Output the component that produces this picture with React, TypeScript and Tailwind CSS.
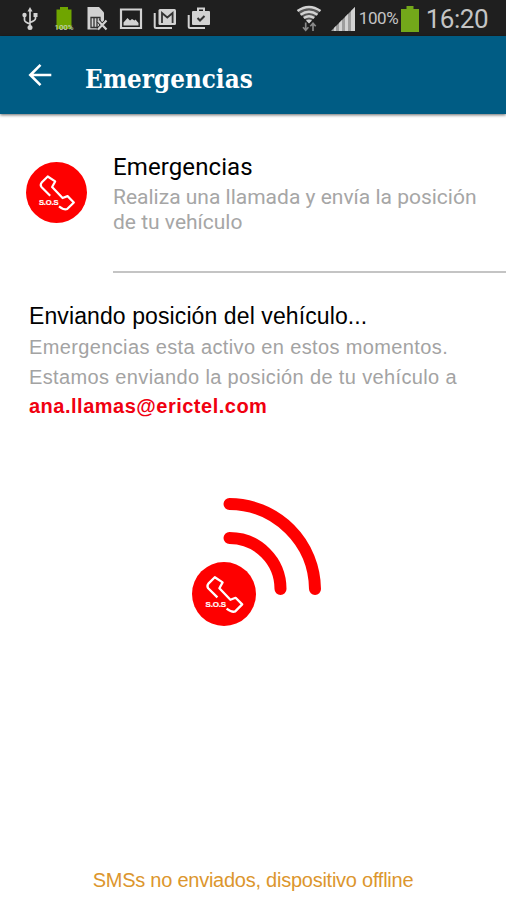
import React from 'react';

// Round SOS badge with the handset outline
function SosBadge({ className }: { className: string }) {
  return (
    <svg viewBox="0 0 64 64" className={className} aria-hidden="true">
      <circle cx="32" cy="32" r="32" fill="#fe0000" />
      <path
        d="M25.4 35.4 16.2 26.2Q14.6 24 16.4 21.6L22.8 15.2 30.6 20.4 27.4 26.2 38.4 37.8 43.6 35.8 50.2 42.4 43.2 49.4Q40.2 50.8 34.6 46.6"
        fill="none"
        stroke="#fff"
        strokeWidth="2.3"
        strokeLinejoin="round"
      />
      <text
        x="13.6"
        y="45.4"
        fill="#fff"
        stroke="#fff"
        strokeWidth="0.2"
        fontFamily="Liberation Sans, sans-serif"
        fontWeight="700"
        fontSize="8"
        textLength="20.5"
      >
        S.O.S
      </text>
    </svg>
  );
}

function NotificationIcons() {
  return (
    <div className="flex items-center">
      {/* USB */}
      <svg viewBox="0 0 18 24" className="h-6 w-[18px]" fill="none" stroke="#d2d2d2" strokeWidth="1.7">
        <path d="M9 4v16M3.5 8v5q0 2 5.5 4M14.5 8v3.5q0 2-5.5 4" />
        <path d="M9 0 6.5 4.5h5z" fill="#d2d2d2" stroke="none" />
        <circle cx="9" cy="20.5" r="2.5" fill="#d2d2d2" stroke="none" />
        <circle cx="3.5" cy="8" r="2.2" fill="#d2d2d2" stroke="none" />
        <path d="M12.5 6h4v4h-4z" fill="#d2d2d2" stroke="none" />
      </svg>
      {/* Full battery */}
      <svg viewBox="0 0 22 24" className="ml-[14px] h-6 w-[22px]">
        <path d="M7 0h8v2.5h3.5V22H3.5V2.5H7z" fill="#6fa500" />
        <text
          x="1.5"
          y="23"
          fill="#c2cfae"
          fontFamily="Roboto, sans-serif"
          fontWeight="500"
          fontSize="8"
          textLength="19"
          lengthAdjust="spacingAndGlyphs"
        >
          100%
        </text>
      </svg>
      {/* SIM missing */}
      <svg viewBox="0 0 22 24" className="ml-[11px] h-6 w-[22px]">
        <path d="M1.5 0H13l5 5.5V14l-4 8.5H1.5z" fill="#d2d2d2" />
        <path d="M5 10.5h9v10H5zM8 10.5v10M11 10.5v10" fill="none" stroke="#333" strokeWidth="1.3" />
        <path d="m12 13.5 8.5 9m0-9-8.5 9" stroke="#1f1f1f" strokeWidth="4" />
        <path d="m12 13.5 8.5 9m0-9-8.5 9" stroke="#d2d2d2" strokeWidth="2.2" />
      </svg>
      {/* Picture */}
      <svg viewBox="0 0 24 24" className="ml-[11px] h-6 w-6">
        <path d="M2 2.5h20V21H2z" fill="none" stroke="#d2d2d2" strokeWidth="2.2" />
        <path d="M4.5 18.5v-3l4-4.500 2.500 2.500 2-1.500 2.500 1.500 1-1 3 3.500v2.500z" fill="#d2d2d2" />
      </svg>
      {/* Mail stack */}
      <svg viewBox="0 0 24 24" className="ml-[10px] h-6 w-6">
        <path d="M1.7 6v13.500q0 1.500 1.500 1.500H19" fill="none" stroke="#d2d2d2" strokeWidth="2" />
        <rect x="5.5" y="2" width="17.5" height="16" rx="1.5" fill="#d2d2d2" />
        <path d="M9 16V6l5.3 4.5L19.6 6v10" fill="none" stroke="#333" strokeWidth="1.8" />
      </svg>
      {/* App updates */}
      <svg viewBox="0 0 24 24" className="ml-[10px] h-6 w-6">
        <path d="M1.7 8v11.500q0 1.500 1.500 1.500H18" fill="none" stroke="#d2d2d2" strokeWidth="2" />
        <path d="M11 4V1.5h6V4" fill="none" stroke="#d2d2d2" strokeWidth="2" />
        <rect x="5" y="4" width="18" height="14" rx="1" fill="#d2d2d2" />
        <path d="m10.500 11 2.500 2.500L17.500 9" fill="none" stroke="#333" strokeWidth="2" />
      </svg>
    </div>
  );
}

function StatusBar() {
  return (
    <div className="flex h-9 items-center justify-between bg-[#1f1f1f] pl-[21px] pr-[18px] pt-px">
      <NotificationIcons />
      <div className="flex items-center font-[Roboto,sans-serif] text-[#c4c4c4]">
        {/* Wifi with traffic arrows */}
        <svg viewBox="0 0 26 28" className="mr-[9px] h-7 w-[26px]" fill="none">
          <path d="M1.3 5.5q11.7-8 23.4 0L13 18z" fill="#555" />
          <path d="M1.5 6q11.5-8 23 0M4.5 9.8q8.5-6 17 0M7.8 13q5.2-3.6 10.4 0" stroke="#d2d2d2" strokeWidth="2.4" />
          <path d="m10 15.5 3 3 3-3q-3-2-6 0z" fill="#d2d2d2" />
          <path d="M9.7 17.5V25M7 22.300l2.700 3 2.700-3M17 26v-7.500m-2.700 2.700 2.700-3 2.700 3" stroke="#888" strokeWidth="1.7" />
        </svg>
        {/* Signal strength */}
        <svg viewBox="0 0 24 24" className="mr-[4px] h-6 w-6">
          <path d="M0 24 24 0v24z" fill="#9d9d9d" />
          <path d="M3 21l2-2v5H3zM8 16l3-3v11H8zM14 10l3-3v17h-3zM20 4l4-4v24h-4z" fill="#d2d2d2" />
        </svg>
        <span className="w-[42px] whitespace-nowrap text-[17px] leading-none tracking-[-0.4px]">100%</span>
        <svg viewBox="0 0 18 26" className="h-[26px] w-[18px]">
          <path d="M5.5 0h7v3H18v23H0V3h5.5z" fill="#73a81a" />
        </svg>
        <span className="ml-[7px] whitespace-nowrap text-[26px] leading-none tracking-[-0.5px]">16:20</span>
      </div>
    </div>
  );
}

function AppBar() {
  return (
    <header className="flex h-[78px] items-center bg-[#005c84] pl-7 shadow-[0_1px_3px_rgba(0,0,0,0.6)]">
      <svg viewBox="0 0 24 24" className="h-6 w-6" fill="none" stroke="#fff" strokeWidth="2.6">
        <path d="M23.3 12H3M12.5 1.8 2.3 12l10.200 10.200" />
      </svg>
      <h1 className="ml-[33px] mt-2 origin-left scale-x-[0.89] whitespace-nowrap font-['DejaVu_Serif',serif] text-[26px] font-bold leading-none text-white">
        Emergencias
      </h1>
    </header>
  );
}

export default function App() {
  return (
    <div className="flex h-[900px] w-[506px] flex-col overflow-hidden bg-white">
      <StatusBar />
      <AppBar />

      <section className="flex h-[159px] pl-[26px] font-[Roboto,sans-serif]">
        <SosBadge className="mt-[48px] h-[61px] w-[61px] shrink-0" />
        <div className="ml-[26px] flex-1 border-b-2 border-[#c4c4c4] pt-[38px]">
          <h2 className="text-[24px] leading-[30px] tracking-[0.1px] text-black">Emergencias</h2>
          <p className="mt-[3px] whitespace-nowrap text-[21px] leading-[25px] text-[#a6a6a6]">
            Realiza una llamada y envía la posición
            <br />
            de tu vehículo
          </p>
        </div>
      </section>

      <section className="whitespace-nowrap pl-[29px] pt-[28px] font-['Liberation_Sans',sans-serif]">
        <h2 className="text-[23px] leading-[31px] tracking-[0.1px] text-black">Enviando posición del vehículo...</h2>
        <p className="mt-px text-[20px] leading-[29.5px] tracking-[0.37px] text-[#a3a3a3]">
          Emergencias esta activo en estos momentos.
          <br />
          Estamos enviando la posición de tu vehículo a
          <br />
          <b className="tracking-[0.5px] text-[#f00010]">ana.llamas@erictel.com</b>
        </p>
      </section>

      {/* Badge emitting its signal */}
      <div className="relative ml-48 mt-[76px] h-[130px] w-[130px]">
        <svg viewBox="0 0 130 130" className="h-full w-full" fill="none" stroke="#fe0000" strokeWidth="12" strokeLinecap="round">
          <path d="M37.5 6a86 86 0 0 1 85.500 85M37.500 40a51 51 0 0 1 51 51" />
        </svg>
        <SosBadge className="absolute bottom-[2px] left-0 h-16 w-16" />
      </div>

      <p className="mb-2 mt-auto whitespace-nowrap text-center font-['Liberation_Sans',sans-serif] text-[20px] leading-6 tracking-[-0.25px] text-[#dc962d]">
        SMSs no enviados, dispositivo offline
      </p>
    </div>
  );
}
